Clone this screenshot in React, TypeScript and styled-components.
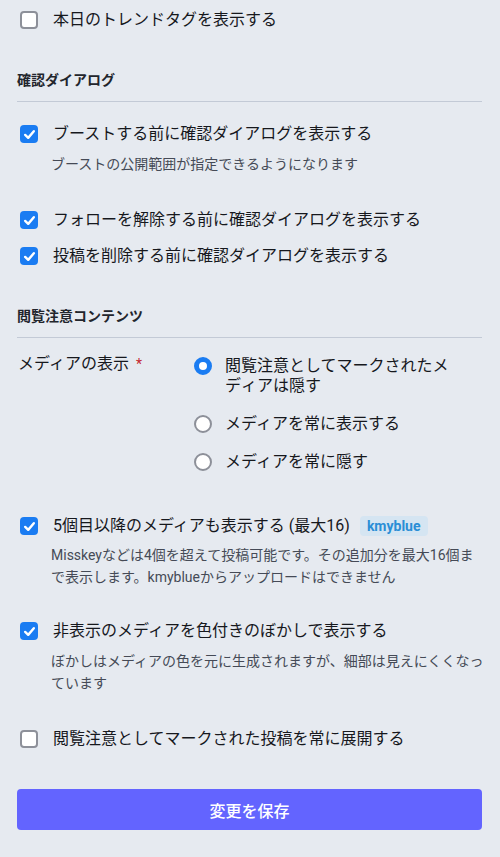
import React from "react";
import styled, { createGlobalStyle } from "styled-components";

const Global = createGlobalStyle`
  html, body { margin: 0; padding: 0; background: #e6eaf0; }
  body { font-family: Roboto, "Noto Sans CJK JP", sans-serif; color: #16181d; }
  * { box-sizing: border-box; }
`;

const Page = styled.div`
  width: 500px;
  padding: 10px 18px 30px 17px;
  display: flex;
  flex-direction: column;
`;

const Row = styled.label<{ $mt?: number }>`
  display: flex;
  align-items: center;
  gap: 15px;
  margin-top: ${(p) => p.$mt ?? 0}px;
  padding-left: 3px;
  font-size: 16px;
  line-height: 20px;
`;

const Box = styled.span<{ $checked?: boolean }>`
  flex: none;
  width: 18px;
  height: 18px;
  border-radius: 4px;
  display: flex;
  align-items: center;
  justify-content: center;
  background: ${(p) => (p.$checked ? "#1a7cf2" : "#fff")};
  border: ${(p) => (p.$checked ? "none" : "2px solid #8d9099")};
`;

const Hint = styled.div<{ $mt?: number }>`
  margin-top: ${(p) => p.$mt ?? 9}px;
  padding-left: 34px;
  margin-right: -4px;
  font-size: 14px;
  line-height: 22px;
  color: #454a56;
`;

const Heading = styled.div<{ $mt: number }>`
  margin-top: ${(p) => p.$mt}px;
  font-size: 14px;
  line-height: 20px;
  font-weight: 700;
  color: #22252c;
  padding-bottom: 11px;
  border-bottom: 1px solid #c3cad6;
`;

const Badge = styled.span`
  margin-left: 10px;
  padding: 2px 7px;
  border-radius: 4px;
  background: #d5e5f2;
  color: #2a8ed6;
  font-size: 14px;
  font-weight: 700;
  line-height: 19px;
`;

const SelectGrid = styled.div`
  margin-top: 18px;
  display: grid;
  grid-template-columns: 176px 1fr;
`;

const SelectLabel = styled.div`
  padding-left: 1px;
  font-size: 16px;
  line-height: 20px;
  margin-top: -2px;
`;

const Star = styled.span`
  color: #c4262f;
  margin-left: 7px;
  font-size: 14px;
`;

const Radios = styled.div`
  display: flex;
  flex-direction: column;
  gap: 18px;
`;

const RadioRow = styled.label`
  display: flex;
  align-items: flex-start;
  gap: 13px;
  padding-left: 1px;
  padding-right: 20px;
  font-size: 16px;
  line-height: 20px;
`;

const RadioText = styled.span`
  line-break: anywhere;
`;

const RadioDot = styled.span<{ $checked?: boolean }>`
  flex: none;
  margin-top: 1px;
  width: 18px;
  height: 18px;
  border-radius: 50%;
  background: #fff;
  border: ${(p) => (p.$checked ? "5px solid #1a7cf2" : "2px solid #8d9099")};
`;

const Save = styled.button`
  margin-top: 40px;
  height: 41px;
  border: none;
  border-radius: 4px;
  background: #6364ff;
  color: #fff;
  font-family: Roboto, "Noto Sans CJK JP", sans-serif;
  font-size: 16px;
  font-weight: 500;
`;

const Check = () => (
  <svg width="13" height="13" viewBox="0 0 12 12" fill="none">
    <path d="M2 6.4 L4.8 9.1 L10 3" stroke="#fff" strokeWidth="2.2" strokeLinecap="round" strokeLinejoin="round" />
  </svg>
);

const CheckRow: React.FC<{ checked?: boolean; mt?: number; children: React.ReactNode }> = ({ checked, mt, children }) => (
  <Row $mt={mt}>
    <Box $checked={checked}>{checked && <Check />}</Box>
    <span>{children}</span>
  </Row>
);

export default function App() {
  return (
    <>
      <Global />
      <Page>
        <CheckRow>本日のトレンドタグを表示する</CheckRow>

        <Heading $mt={40}>確認ダイアログ</Heading>
        <CheckRow checked mt={22}>ブーストする前に確認ダイアログを表示する</CheckRow>
        <Hint>ブーストの公開範囲が指定できるようになります</Hint>
        <CheckRow checked mt={35}>フォローを解除する前に確認ダイアログを表示する</CheckRow>
        <CheckRow checked mt={16}>投稿を削除する前に確認ダイアログを表示する</CheckRow>

        <Heading $mt={40}>閲覧注意コンテンツ</Heading>
        <SelectGrid>
          <SelectLabel>
            メディアの表示<Star>*</Star>
          </SelectLabel>
          <Radios>
            <RadioRow>
              <RadioDot $checked />
              <RadioText>
                閲覧注意としてマークされたメデ<wbr />ィアは隠す
              </RadioText>
            </RadioRow>
            <RadioRow>
              <RadioDot />
              <RadioText>メディアを常に表示する</RadioText>
            </RadioRow>
            <RadioRow>
              <RadioDot />
              <RadioText>メディアを常に隠す</RadioText>
            </RadioRow>
          </Radios>
        </SelectGrid>

        <Row $mt={44}>
          <Box $checked>
            <Check />
          </Box>
          <span>
            5個目以降のメディアも表示する (最大16)
            <Badge>kmyblue</Badge>
          </span>
        </Row>
        <Hint $mt={8}>
          Misskeyなどは4個を超えて投稿可能です。その追加分を最大16個まで表示します。kmyblueからアップロードはできません
        </Hint>
        <CheckRow checked mt={33}>非表示のメディアを色付きのぼかしで表示する</CheckRow>
        <Hint>ぼかしはメディアの色を元に生成されますが、細部は見えにくくなっています</Hint>
        <CheckRow mt={35}>閲覧注意としてマークされた投稿を常に展開する</CheckRow>

        <Save>変更を保存</Save>
      </Page>
    </>
  );
}
